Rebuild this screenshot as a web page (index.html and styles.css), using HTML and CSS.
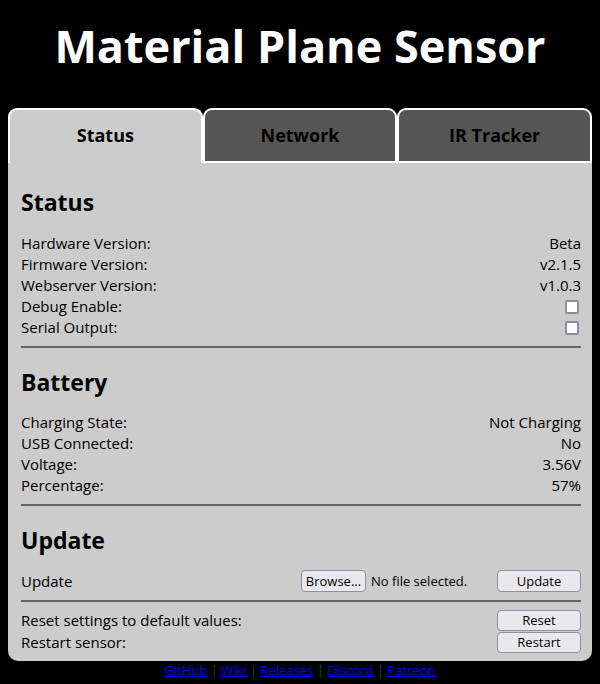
FILE: index.html
```html
<!DOCTYPE html>
<html>
<head>
<meta charset="utf-8">
<link rel="stylesheet" href="styles.css">
</head>
<body>
<h1 class="title">Material Plane Sensor</h1>
<div class="tabs">
  <div class="tab active">Status</div>
  <div class="tab">Network</div>
  <div class="tab">IR Tracker</div>
</div>
<div class="panel">
  <h2 class="heading first">Status</h2>
  <div class="row"><span>Hardware Version:</span><span>Beta</span></div>
  <div class="row"><span>Firmware Version:</span><span>v2.1.5</span></div>
  <div class="row"><span>Webserver Version:</span><span>v1.0.3</span></div>
  <div class="row"><span>Debug Enable:</span><span class="check"></span></div>
  <div class="row"><span>Serial Output:</span><span class="check"></span></div>
  <hr class="sep">
  <h2 class="heading">Battery</h2>
  <div class="row"><span>Charging State:</span><span>Not Charging</span></div>
  <div class="row"><span>USB Connected:</span><span>No</span></div>
  <div class="row"><span>Voltage:</span><span>3.56V</span></div>
  <div class="row"><span>Percentage:</span><span>57%</span></div>
  <hr class="sep">
  <h2 class="heading">Update</h2>
  <div class="row update">
    <span>Update</span>
    <div class="right-half">
      <div class="file"><button class="btn browse">Browse...</button><span class="nofile">No file selected.</span></div>
      <button class="btn wide tall">Update</button>
    </div>
  </div>
  <hr class="sep small">
  <div class="row brow"><span>Reset settings to default values:</span><button class="btn wide">Reset</button></div>
  <div class="row brow"><span>Restart sensor:</span><button class="btn wide">Restart</button></div>
</div>
<div class="footer">
  <a href="#">GitHub</a> <span class="bar">|</span> <a href="#">Wiki</a> <span class="bar">|</span> <a href="#">Releases</a> <span class="bar">|</span> <a href="#">Discord</a> <span class="bar">|</span> <a href="#">Patreon</a>
</div>
</body>
</html>
```
FILE: styles.css
```css
html, body {
  background: #000;
}
body {
  margin: 8px;
  font-family: "Open Sans", "Noto Sans", sans-serif;
  color: #000;
}
.title {
  margin: 0;
  height: 100px;
  line-height: 76px;
  text-align: center;
  color: #fff;
  font-size: 45px;
  font-weight: 700;
}
.tabs {
  display: flex;
}
.tab {
  flex: 1;
  height: 51px;
  line-height: 51px;
  border: 2px solid #fff;
  border-radius: 9px 9px 0 0;
  background: #555;
  text-align: center;
  font-size: 18px;
  font-weight: 700;
  color: #000;
}
.tab.active {
  background: #ccc;
  border-bottom: 0;
  height: 53px;
}
.panel {
  background: #ccc;
  border-radius: 0 0 10px 10px;
  padding: 0 11px 8px 13px;
  font-size: 15px;
  overflow: hidden;
}
.heading {
  margin: 18px 0 14px;
  font-size: 23px;
  line-height: 32px;
  font-weight: 700;
}
.heading.first {
  margin-top: 23px;
  margin-bottom: 15px;
}
.row {
  display: flex;
  justify-content: space-between;
  align-items: center;
  height: 21px;
  line-height: 21px;
}
.check {
  width: 10px;
  height: 10px;
  border: 2px solid #8d8d99;
  border-radius: 2px;
  background: #fff;
  margin-right: 2px;
}
.sep {
  border: 0;
  height: 2px;
  background: #666;
  margin: 8px 0 0;
}
.update {
  height: 22px;
}
.right-half {
  width: 280px;
  display: flex;
  justify-content: space-between;
  align-items: center;
}
.file {
  display: flex;
  align-items: center;
}
.nofile {
  font-size: 13px;
  margin-left: 5px;
}
.btn {
  font-family: "Open Sans", "Noto Sans", sans-serif;
  font-size: 13px;
  color: #000;
  background: #e9e9ed;
  border: 1px solid #8f8f9d;
  border-radius: 4px;
  height: 21px;
  padding: 0;
  line-height: 19px;
}
.browse {
  width: 65px;
  height: 22px;
}
.wide {
  width: 84px;
}
.tall {
  height: 22px;
}
.sep.small {
  margin-bottom: 8px;
}
.brow {
  height: 21px;
}
.brow + .brow {
  margin-top: 1px;
}
.footer {
  text-align: center;
  font-size: 13px;
  line-height: 18px;
}
.footer a {
  color: #00e;
  text-decoration: underline;
}
.bar {
  color: #3a3a3a;
}
```
